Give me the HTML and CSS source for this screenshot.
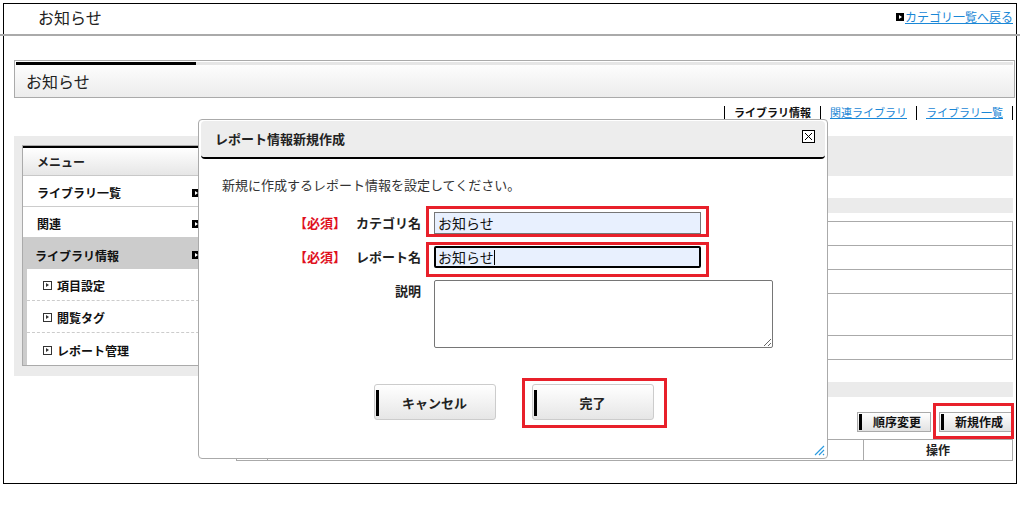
FILE: index.html
```html
<!DOCTYPE html>
<html lang="ja">
<head>
    <meta charset="UTF-8">
    <title>お知らせ</title>
    <link rel="stylesheet" href="styles.css">
</head>
<body>

<div class="frame">
    <div class="topbar">
        <span class="site-title">お知らせ</span>
        <a href="#" class="back-link"><span class="sq-icon"></span>カテゴリ一覧へ戻る</a>
    </div>
    <div class="rule"></div>

    <div class="page-title">
        <div class="page-title-bar"></div>
        <h1>お知らせ</h1>
    </div>

    <nav class="tabs">
        <span class="tab current">ライブラリ情報</span>
        <a href="#" class="tab">関連ライブラリ</a>
        <a href="#" class="tab">ライブラリ一覧</a>
    </nav>

    <div class="main">
        <!-- メニュー -->
        <aside class="sidebar">
            <div class="menu">
                <div class="menu-head">メニュー</div>
                <a href="#" class="menu-item">ライブラリ一覧<span class="arrow"></span></a>
                <a href="#" class="menu-item">関連<span class="arrow"></span></a>
                <a href="#" class="menu-item active">ライブラリ情報<span class="arrow"></span></a>
                <div class="submenu">
                    <a href="#" class="sub-item"><span class="box-icon"></span>項目設定</a>
                    <a href="#" class="sub-item"><span class="box-icon"></span>閲覧タグ</a>
                    <a href="#" class="sub-item"><span class="box-icon"></span>レポート管理</a>
                </div>
            </div>
        </aside>

        <div class="content">
            <div class="content-head"></div>
            <div class="band"></div>
            <div class="info-rows">
                <div class="info-row"></div>
                <div class="info-row"></div>
                <div class="info-row"></div>
                <div class="info-row tall"></div>
                <div class="info-row"></div>
            </div>
            <div class="band"></div>
            <div class="actions">
                <button class="small-btn">順序変更</button>
                <span class="mark mark-new"><button class="small-btn">新規作成</button></span>
            </div>
            <div class="list-head">
                <div class="cell cell-check"></div>
                <div class="cell cell-main"></div>
                <div class="cell cell-op">操作</div>
            </div>
        </div>
    </div>
</div>

<!-- ダイアログ -->
<div class="dialog">
    <div class="dialog-head">
        <span class="dialog-title">レポート情報新規作成</span>
        <span class="close-btn">
            <svg width="13" height="13" viewBox="0 0 13 13">
                <rect x="0.5" y="0.5" width="12" height="12" fill="#fff" stroke="#000"/>
                <path d="M3 3 L10 10 M10 3 L3 10" stroke="#000" stroke-width="1"/>
            </svg>
        </span>
    </div>
    <div class="dialog-body">
        <p class="lead">新規に作成するレポート情報を設定してください。</p>
        <div class="form">
            <label class="label"><span class="req">【必須】</span>カテゴリ名</label>
            <span class="mark mark-f1"><input class="field" type="text" value="お知らせ"></span>

            <label class="label"><span class="req">【必須】</span>レポート名</label>
            <span class="mark mark-f2"><input class="field focused" type="text" value="お知らせ"><span class="caret"></span></span>

            <label class="label">説明</label>
            <textarea class="memo"></textarea>
        </div>
        <div class="dialog-actions">
            <button class="btn">キャンセル</button>
            <span class="mark mark-done"><button class="btn">完了</button></span>
        </div>
    </div>
    <svg class="grip" width="12" height="12" viewBox="0 0 12 12">
        <path d="M11 2 L2 11 M11 6 L6 11 M11 10 L10 11" stroke="#2b9be0" stroke-width="1.2"/>
    </svg>
</div>

</body>
</html>
```

FILE: styles.css
```css
/* ページ全体 */
* {
    box-sizing: border-box;
}

body {
    margin: 0;
    width: 1020px;
    height: 512px;
    overflow: hidden;
    font-family: "Noto Sans CJK JP", "Noto Sans", sans-serif;
    color: #222;
    background-color: #fff;
}

.frame {
    margin: 3px 0 0 3px;
    width: 1014px;
    height: 481px;
    border: 1px solid #000;
}

/* ヘッダー */
.topbar {
    display: flex;
    justify-content: space-between;
    align-items: center;
    height: 30px;
    padding: 0 3px 4px 34px;
}

.site-title {
    font-size: 16px;
    line-height: 20px;
}

.back-link {
    display: flex;
    align-items: center;
    gap: 1px;
    font-size: 12px;
    line-height: 16px;
    color: #1a87d6;
    text-decoration: underline;
}

.sq-icon,
.arrow {
    position: relative;
    display: inline-block;
    width: 8px;
    height: 8px;
    background-color: #000;
}

.sq-icon::after,
.arrow::after {
    content: "";
    position: absolute;
    left: 3px;
    top: 2px;
    border-left: 3px solid #fff;
    border-top: 2px solid transparent;
    border-bottom: 2px solid transparent;
}

.rule {
    height: 2px;
    margin: 0 -5px 0 -4px;
    background-color: #aaa;
}

/* タイトル */
.page-title {
    height: 38px;
    margin: 24px 1px 0 10px;
    border: 1px solid #aaa;
    background: linear-gradient(#fff, #ececec);
}

.page-title-bar {
    height: 3px;
    margin: 1px 1px 0 1px;
    background: linear-gradient(to right, #000 180px, #e6e6e6 180px);
}

.page-title h1 {
    margin: 0;
    padding: 6px 0 0 11px;
    font-size: 16px;
    font-weight: normal;
    line-height: 20px;
}

/* タブ */
.tabs {
    display: flex;
    justify-content: flex-end;
    height: 14px;
    margin: 8px 3px 0 0;
    font-size: 11px;
    line-height: 13px;
}

.tab {
    padding: 0 9px;
    border-left: 1px solid #000;
    color: #1a87d6;
    text-decoration: underline;
}

.tab:last-child {
    border-right: 1px solid #000;
}

.tab.current {
    color: #111;
    font-weight: bold;
    text-decoration: none;
}

/* メイン */
.main {
    display: flex;
    align-items: flex-start;
    gap: 8px;
    margin: 16px 3px 0 10px;
}

.sidebar {
    flex: none;
    width: 214px;
    padding: 9px 8px 10px;
    background-color: #ebebeb;
}

.menu {
    border: 1px solid #aaa;
    background-color: #fff;
}

.menu-head {
    height: 30px;
    padding-left: 14px;
    border-top: 2px solid #000;
    border-bottom: 1px solid #c8c8c8;
    background: linear-gradient(#fff, #e6e6e6);
    font-size: 12px;
    font-weight: bold;
    line-height: 27px;
}

.menu-item {
    display: flex;
    justify-content: space-between;
    align-items: center;
    height: 31px;
    padding: 3px 19px 0 14px;
    border-bottom: 1px solid #ccc;
    font-size: 12px;
    font-weight: bold;
    color: #111;
    text-decoration: none;
}

.menu-item.active {
    padding-left: 12px;
    background-color: #ccc;
    border-bottom: 0;
}

.submenu {
    border-left: 4px solid #ccc;
}

.sub-item {
    display: flex;
    align-items: center;
    gap: 5px;
    height: 32px;
    padding: 2px 0 0 16px;
    border-bottom: 1px dashed #ccc;
    font-size: 12px;
    font-weight: bold;
    color: #111;
    text-decoration: none;
}

.sub-item:last-child {
    border-bottom: 0;
}

.box-icon {
    position: relative;
    display: inline-block;
    width: 9px;
    height: 9px;
    border: 1px solid #333;
}

.box-icon::after {
    content: "";
    position: absolute;
    left: 2px;
    top: 1px;
    border-left: 3px solid #333;
    border-top: 2.5px solid transparent;
    border-bottom: 2.5px solid transparent;
}

.content {
    flex: 1;
}

.content-head {
    height: 40px;
    background-color: #ebebeb;
}

.band {
    height: 15px;
    margin-top: 22px;
    background-color: #ebebeb;
}

.info-rows {
    margin-top: 8px;
    border: 1px solid #aaa;
}

.info-row {
    height: 24px;
    border-top: 1px solid #aaa;
}

.info-row:first-child {
    height: 23px;
    border-top: 0;
}

.info-row.tall {
    height: 42px;
}

.actions {
    display: flex;
    justify-content: flex-end;
    align-items: flex-start;
    gap: 8px;
    margin-top: 15px;
}

.small-btn {
    position: relative;
    display: block;
    width: 74px;
    height: 20px;
    padding: 0 0 0 6px;
    border: 1px solid #aaa;
    background: linear-gradient(#fff, #e2e2e2);
    font-family: inherit;
    font-size: 12px;
    font-weight: bold;
    line-height: 18px;
    color: #111;
}

.small-btn::before {
    content: "";
    position: absolute;
    left: 1px;
    top: 1px;
    bottom: 1px;
    width: 3px;
    background-color: #000;
}

.list-head {
    display: flex;
    height: 22px;
    margin-top: 7px;
    border: 1px solid #aaa;
}

.cell {
    border-right: 1px solid #aaa;
    font-size: 12px;
    font-weight: bold;
    line-height: 20px;
    text-align: center;
}

.cell-check {
    width: 31px;
}

.cell-main {
    flex: 1;
}

.cell-op {
    width: 148px;
    border-right: 0;
}

/* 赤枠 */
.mark {
    position: relative;
    display: flex;
}

.mark::after {
    content: "";
    position: absolute;
    border: 3px solid #e8202a;
    pointer-events: none;
}

.mark-new::after {
    left: -6px;
    right: -1px;
    top: -9px;
    bottom: -7px;
}

.mark-f1::after {
    left: -8px;
    right: -8px;
    top: -6px;
    bottom: -3px;
}

.mark-f2::after {
    left: -8px;
    right: -8px;
    top: -4px;
    bottom: -9px;
}

.mark-done::after {
    left: -10px;
    right: -13px;
    top: -6px;
    bottom: -8px;
}

/* ダイアログ */
.dialog {
    position: absolute;
    left: 198px;
    top: 119px;
    width: 630px;
    height: 340px;
    border: 1px solid #aaa;
    border-radius: 4px;
    background-color: #fff;
}

.dialog-head {
    display: flex;
    justify-content: space-between;
    align-items: center;
    height: 38px;
    margin: 1px 2px 0 2px;
    padding: 0 10px 0 14px;
    border-bottom: 2px solid #000;
    border-radius: 4px;
    background-color: #ededed;
}

.dialog-title {
    font-size: 13px;
    font-weight: bold;
    line-height: 18px;
    color: #222;
}

.close-btn {
    display: flex;
    margin-bottom: 5px;
}

.dialog-body {
    padding-top: 17px;
}

.lead {
    margin: 0 0 0 23px;
    font-size: 13px;
    line-height: 18px;
    color: #333;
}

.form {
    display: grid;
    grid-template-columns: 199px auto;
    column-gap: 13px;
    row-gap: 12px;
    justify-items: start;
    align-items: start;
    margin: 18px 0 0 23px;
}

.label {
    justify-self: end;
    display: flex;
    gap: 10px;
    font-size: 13px;
    font-weight: bold;
    line-height: 22px;
    color: #222;
}

.req {
    color: #e0101e;
}

.field {
    display: block;
    width: 267px;
    height: 22px;
    margin: 0;
    padding: 0 3px;
    border: 1px solid #767676;
    background-color: #e8f0fe;
    font-family: inherit;
    font-size: 14px;
    color: #111;
}

.field.focused {
    border: 2px solid #000;
    border-radius: 2px;
    padding: 0 2px;
}

.caret {
    position: absolute;
    left: 60px;
    top: 4px;
    width: 1px;
    height: 15px;
    background-color: #000;
}

.memo {
    display: block;
    width: 339px;
    height: 68px;
    margin: 0;
    border: 1px solid #767676;
    border-radius: 2px;
    font-family: inherit;
}

.dialog-actions {
    display: flex;
    justify-content: center;
    gap: 36px;
    margin-top: 36px;
    padding-left: 1px;
}

.btn {
    position: relative;
    display: block;
    width: 122px;
    height: 36px;
    border: 1px solid #ccc;
    border-radius: 3px;
    background: linear-gradient(#fff, #e6e6e6);
    font-family: inherit;
    font-size: 13px;
    font-weight: bold;
    color: #222;
}

.btn::before {
    content: "";
    position: absolute;
    left: 1px;
    top: 5px;
    width: 3px;
    height: 26px;
    background-color: #000;
}

.grip {
    position: absolute;
    right: 2px;
    bottom: 2px;
}
```
